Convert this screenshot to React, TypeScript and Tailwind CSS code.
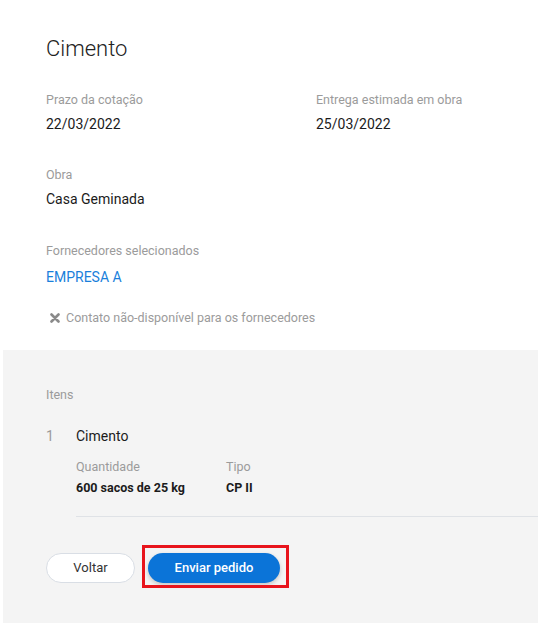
function Field({ label, value }: { label: string; value: string }) {
  return (
    <div>
      <p className="text-[12.5px] leading-[16px] text-[#9b9b9b]">{label}</p>
      <p className="mt-[8px] text-[14px] leading-[17px] text-[#1b1b1b]">{value}</p>
    </div>
  );
}

export default function App() {
  return (
    <div className="h-[625px] w-[538px] overflow-hidden bg-white font-['Roboto',sans-serif]">
      <div className="px-[46px] pb-[24px] pt-[36px]">
        <h1 className="text-[22px] font-light leading-[26px] text-[#222]">Cimento</h1>

        <div className="mt-[30px] grid grid-cols-[270px_1fr]">
          <Field label="Prazo da cotação" value="22/03/2022" />
          <Field label="Entrega estimada em obra" value="25/03/2022" />
        </div>

        <div className="mt-[34px]">
          <Field label="Obra" value="Casa Geminada" />
        </div>

        <div className="mt-[35px]">
          <p className="text-[12.5px] leading-[16px] text-[#9b9b9b]">Fornecedores selecionados</p>
          <p className="mt-[10px] text-[14px] leading-[17px] text-[#1a7fdb]">EMPRESA A</p>
        </div>

        <div className="mt-[24px] flex items-center gap-[6px] pl-[4px] text-[12.5px] leading-[16px] text-[#9b9b9b]">
          <svg width="10" height="10" viewBox="0 0 10 10" className="text-[#8a8a8a]">
            <path d="M1.5 1.5 L8.5 8.5 M8.5 1.5 L1.5 8.5" stroke="currentColor" strokeWidth="2.6" strokeLinecap="round" />
          </svg>
          <span>Contato não-disponível para os fornecedores</span>
        </div>
      </div>

      <section className="mb-[2px] ml-[3px] h-[273px] bg-[#f4f4f4] pl-[43px] pt-[37px]">
        <p className="text-[12.5px] leading-[16px] text-[#9b9b9b]">Itens</p>

        <div className="mt-[25px] flex">
          <span className="w-[30px] text-[14px] leading-[17px] text-[#9b9b9b]">1</span>
          <div className="flex-1">
            <p className="text-[14px] leading-[17px] text-[#1b1b1b]">Cimento</p>
            <div className="mt-[14px] grid grid-cols-[150px_1fr] border-b border-[#dfe2e6] pb-[20px]">
              <div>
                <p className="text-[12.5px] leading-[16px] text-[#9b9b9b]">Quantidade</p>
                <p className="mt-[5px] text-[12.5px] font-bold leading-[16px] text-[#1b1b1b]">600 sacos de 25 kg</p>
              </div>
              <div>
                <p className="text-[12.5px] leading-[16px] text-[#9b9b9b]">Tipo</p>
                <p className="mt-[5px] text-[12.5px] font-bold leading-[16px] text-[#1b1b1b]">CP II</p>
              </div>
            </div>
          </div>
        </div>

        <div className="mt-[36px] flex items-center gap-[13px]">
          <button
            type="button"
            className="h-[30px] w-[89px] rounded-full border border-[#d9dee5] bg-white text-[13px] text-[#333]"
          >
            Voltar
          </button>
          <div className="relative">
            <button
              type="button"
              className="h-[30px] w-[132px] rounded-full bg-[#0b74d8] text-[13px] font-medium text-white shadow-[0_2px_4px_rgba(0,0,0,0.2)]"
            >
              Enviar pedido
            </button>
            <div className="pointer-events-none absolute -bottom-[5px] -left-[6px] -right-[9px] -top-[8px] border-[3px] border-[#e8141c]" />
          </div>
        </div>
      </section>
    </div>
  );
}
